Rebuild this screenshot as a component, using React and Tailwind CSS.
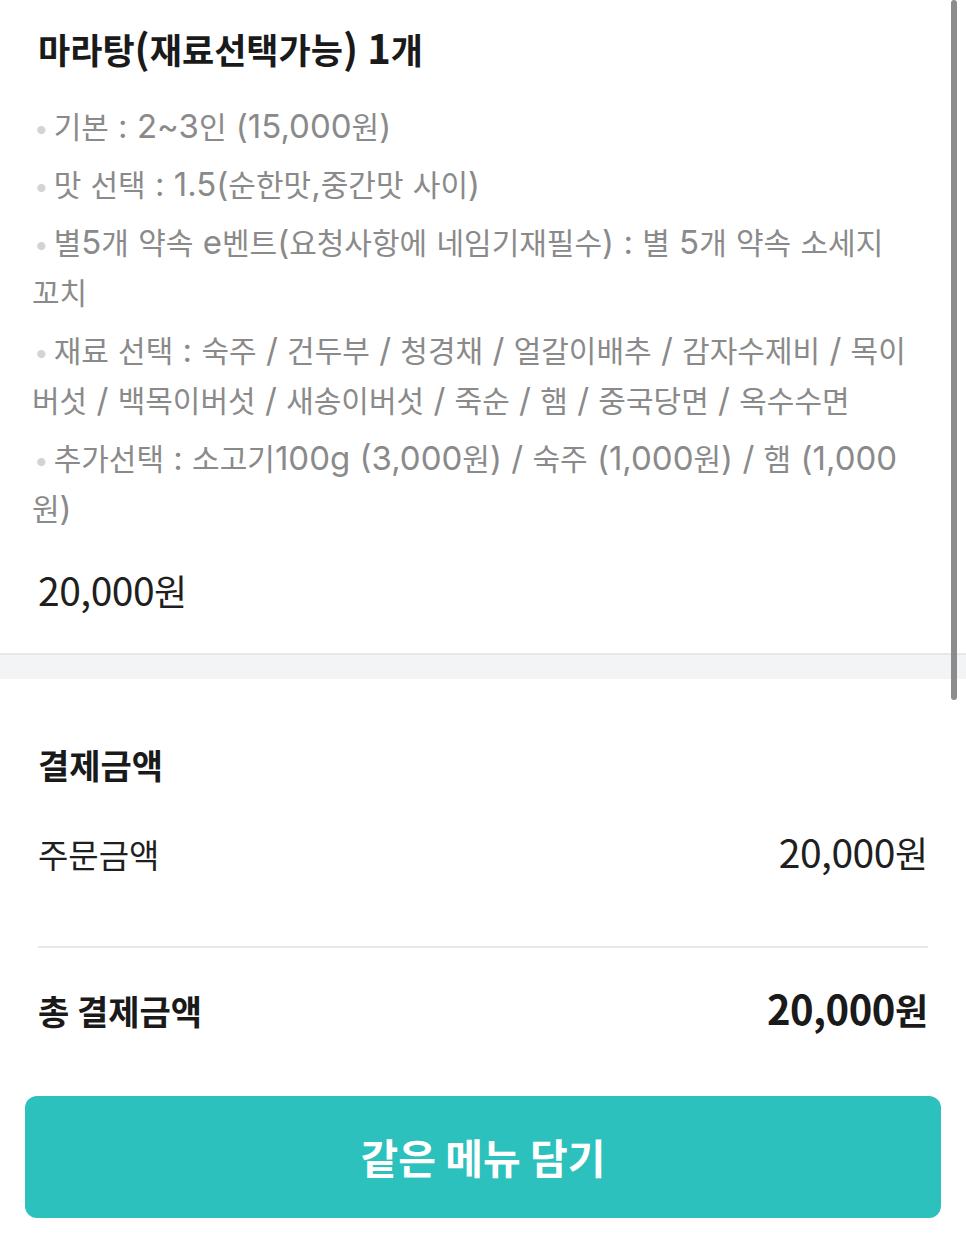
import React from 'react';

const ko = { fontFamily: '"Noto Sans CJK KR", "Noto Sans", sans-serif' };
const latin = { fontFamily: 'Inter, "Noto Sans CJK KR", sans-serif' };

const HANGUL = /([\u3131-\uD7A3]+)/;
const isHangul = (s) => /[\u3131-\uD7A3]/.test(s);

// Hangul and latin runs get different sizes, like the system font on the phone
const Mixed = ({ text, koClass, latinClass, latinFont }) =>
  text.split(HANGUL).map((part, i) =>
    part === '' ? null : isHangul(part) ? (
      <span key={i} className={koClass} style={ko}>{part}</span>
    ) : (
      <span key={i} className={latinClass} style={latinFont}>{part}</span>
    )
  );

const options = [
  '기본 : 2~3인 (15,000원)',
  '맛 선택 : 1.5(순한맛,중간맛 사이)',
  '별5개 약속 e벤트(요청사항에 네임기재필수) : 별 5개 약속 소세지 꼬치',
  '재료 선택 : 숙주 / 건두부 / 청경채 / 얼갈이배추 / 감자수제비 / 목이버섯 / 백목이버섯 / 새송이버섯 / 죽순 / 햄 / 중국당면 / 옥수수면',
  '추가선택 : 소고기100g (3,000원) / 숙주 (1,000원) / 햄 (1,000원)',
];

const OptionLine = ({ text }) => (
  <p className="text-[33px] leading-[50px] text-[#8a8a8a]" style={latin}>
    <span className="text-[#d4d4d4] text-[26px] leading-none ml-[2px] mr-[5px]">•</span>
    <Mixed text={text} koClass="text-[30px] leading-none" latinClass="" latinFont={latin} />
  </p>
);

const Price = ({ koClass, numClass }) => (
  <Mixed text="20,000원" koClass={koClass} latinClass={numClass} latinFont={ko} />
);

export default function App() {
  return (
    <div className="relative w-[966px] min-h-[1243px] bg-white" style={ko}>
      {/* scroll indicator */}
      <div className="absolute right-[9px] top-0 h-[700px] w-[6px] rounded-full bg-[#8c8c8c]" />

      {/* order item */}
      <section className="pl-[32px] pr-[50px] pt-[25px] pb-[42px]">
        <h1 className="h-[44px] pl-[6px] leading-[44px] font-bold text-[#1a1a1a]">
          <Mixed text="마라탕(재료선택가능) 1개" koClass="text-[35px]" latinClass="text-[40px]" latinFont={ko} />
        </h1>
        <div className="mt-[32px] flex flex-col gap-[8px]">
          {options.map((o, i) => (
            <OptionLine key={i} text={o} />
          ))}
        </div>
        <p className="mt-[34px] h-[44px] pl-[6px] leading-[44px] text-[#1f1f1f]">
          <Price koClass="text-[36px]" numClass="text-[39px] tracking-[-0.5px]" />
        </p>
      </section>

      <div className="h-[26px] border-t-2 border-[#e6e7e9] bg-[#f3f4f6]" />

      {/* payment */}
      <section className="px-[38px] pt-[64px]">
        <h2 className="h-[44px] text-[34px] leading-[44px] font-bold text-[#1a1a1a]">결제금액</h2>
        <div className="mt-[42px] flex h-[44px] items-baseline justify-between leading-[44px] text-[#1f1f1f]">
          <span className="text-[33px]">주문금액</span>
          <span>
            <Price koClass="text-[36px]" numClass="text-[39px] tracking-[-0.5px]" />
          </span>
        </div>
        <div className="mt-[73px] h-[2px] bg-[#e8e8e8]" />
        <div className="mt-[38px] flex h-[44px] items-baseline justify-between leading-[44px] font-bold text-[#1a1a1a]">
          <span className="text-[34px]">총 결제금액</span>
          <span>
            <Price koClass="text-[36px]" numClass="text-[40px] tracking-[-0.5px]" />
          </span>
        </div>
      </section>

      <div className="px-[25px] pt-[66px] pb-[25px]">
        <button className="flex h-[122px] w-full items-center justify-center rounded-[12px] bg-[#2cc1bd] text-[41px] font-semibold text-white">
          같은 메뉴 담기
        </button>
      </div>
    </div>
  );
}
